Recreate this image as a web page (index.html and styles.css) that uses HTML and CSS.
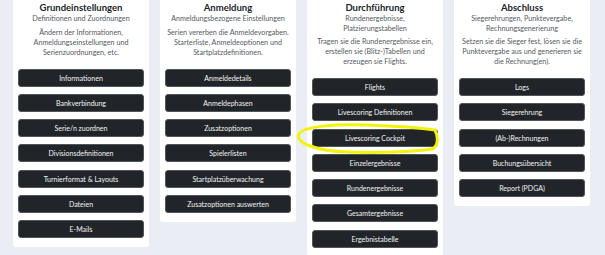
FILE: index.html
```html
<!DOCTYPE html>
<html>
<head>
    <meta charset="UTF-8">
    <link rel="stylesheet" href="styles.css">
</head>
<body>
    <div class="board">
        <div class="card">
            <h3>Grundeinstellungen</h3>
            <div class="subtitle">Definitionen und Zuordnungen</div>
            <p class="desc">Ändern der Informationen, Anmeldungseinstellungen und Serienzuordnungen, etc.</p>
            <div class="actions">
                <button class="btn">Informationen</button>
                <button class="btn">Bankverbindung</button>
                <button class="btn">Serie/n zuordnen</button>
                <button class="btn">Divisionsdefinitionen</button>
                <button class="btn">Turnierformat &amp; Layouts</button>
                <button class="btn">Dateien</button>
                <button class="btn">E-Mails</button>
            </div>
        </div>

        <div class="card">
            <h3>Anmeldung</h3>
            <div class="subtitle">Anmeldungsbezogene Einstellungen</div>
            <p class="desc">Serien vererben die Anmeldevorgaben. Starterliste, Anmeldeoptionen und Startplatzdefinitionen.</p>
            <div class="actions">
                <button class="btn">Anmeldedetails</button>
                <button class="btn">Anmeldephasen</button>
                <button class="btn">Zusatzoptionen</button>
                <button class="btn">Spielerlisten</button>
                <button class="btn">Startplatzüberwachung</button>
                <button class="btn">Zusatzoptionen auswerten</button>
            </div>
        </div>

        <div class="card card-tall">
            <h3>Durchführung</h3>
            <div class="subtitle">Rundenergebnisse,<br>Platzierungstabellen</div>
            <p class="desc">Tragen sie die Rundenergebnisse ein, erstellen sie (Blitz-)Tabellen und erzeugen sie Flights.</p>
            <div class="actions">
                <button class="btn">Flights</button>
                <button class="btn">Livescoring Definitionen</button>
                <div class="marked">
                    <button class="btn">Livescoring Cockpit</button>
                    <svg class="marker" viewBox="0 0 144 34" width="144" height="34">
                        <path d="M70 3 C40 2 8 4 3 12 C-1 21 20 29 52 30 C80 31 118 30 136 27 C143 24 142 14 139 8 C120 5 100 4 70 3" fill="none" stroke="#f2f20a" stroke-width="3" stroke-linecap="round"/>
                    </svg>
                </div>
                <button class="btn">Einzelergebnisse</button>
                <button class="btn">Rundenergebnisse</button>
                <button class="btn">Gesamtergebnisse</button>
                <button class="btn">Ergebnistabelle</button>
            </div>
        </div>

        <div class="card">
            <h3>Abschluss</h3>
            <div class="subtitle">Siegerehrungen, Punktevergabe, Rechnungsgenerierung</div>
            <p class="desc">Setzen sie die Sieger fest, lösen sie die Punktevergabe aus und generieren sie die Rechnung(en).</p>
            <div class="actions">
                <button class="btn">Logs</button>
                <button class="btn">Siegerehrung</button>
                <button class="btn">(Ab-)Rechnungen</button>
                <button class="btn">Buchungsübersicht</button>
                <button class="btn">Report (PDGA)</button>
            </div>
        </div>
    </div>
</body>
</html>
```

FILE: styles.css
```css
body {
    margin: 0;
    background: #eaedf4;
    font-family: Lato, "Open Sans", sans-serif;
    overflow: hidden;
}

.board {
    display: flex;
    align-items: flex-start;
    gap: 11px;
    padding-left: 13px;
}

.card {
    width: 136px;
    box-sizing: border-box;
    background: #fff;
    border-radius: 0 0 3px 3px;
    padding: 2px 5px 9px;
    text-align: center;
}

.card-tall {
    padding-bottom: 20px;
}

.card h3 {
    margin: 0;
    font-size: 9.5px;
    line-height: 12px;
    font-weight: 700;
    color: #212529;
}

.subtitle {
    font-size: 7.2px;
    line-height: 9.5px;
    color: #555b62;
}

.desc {
    margin: 4px 0 11px;
    font-size: 7.2px;
    line-height: 10px;
    color: #555b62;
}

.actions {
    display: flex;
    flex-direction: column;
    gap: 7.3px;
}

.btn {
    display: block;
    width: 100%;
    height: 18px;
    padding: 0;
    background: #212529;
    color: #f4f4f4;
    border: 1px solid #50555b;
    border-radius: 3px;
    font-family: inherit;
    font-size: 7px;
}

.marked {
    position: relative;
}

.marker {
    position: absolute;
    left: -16px;
    top: -7px;
    pointer-events: none;
}
```
